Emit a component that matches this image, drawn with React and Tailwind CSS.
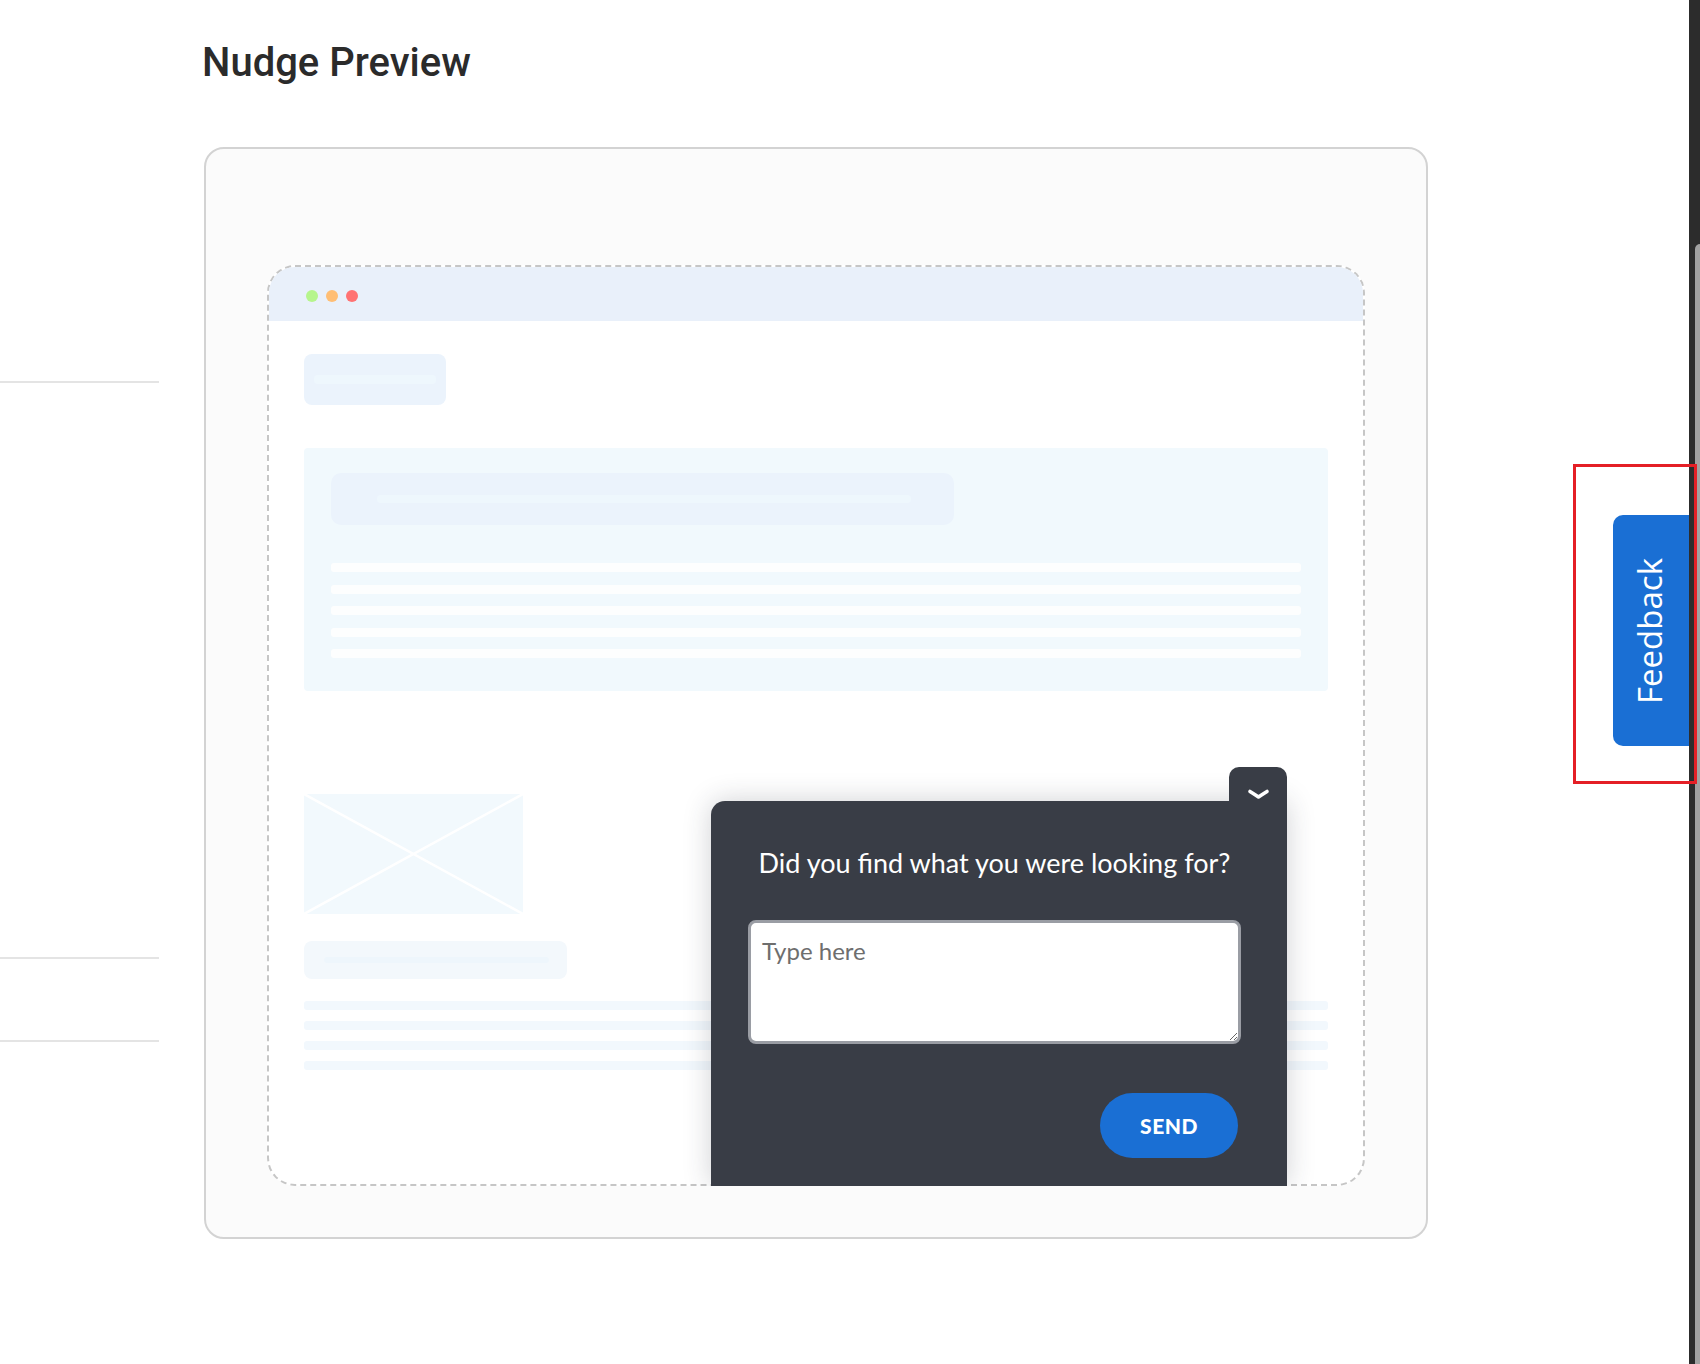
import { useState } from 'react';

function Dots() {
  return (
    <div className="flex h-[54px] items-center gap-[8px] bg-[#e9f0fa] pl-[37px] pt-[4px]">
      <span className="h-3 w-3 rounded-full bg-[#b6f58c]" />
      <span className="h-3 w-3 rounded-full bg-[#ffbe74]" />
      <span className="h-3 w-3 rounded-full bg-[#ff7272]" />
    </div>
  );
}

function FeedbackPopup() {
  const [text, setText] = useState('');
  return (
    <div className="absolute -bottom-[2px] left-[442px] h-[385px] w-[576px] rounded-tl-[14px] bg-[#393d46] pl-[37px] pr-[46px] pt-[46px] font-['Lato',sans-serif] shadow-[0_0_28px_rgba(40,44,60,0.22)] [clip-path:inset(-80px_-60px_0_-60px)]">
      {/* collapse tab */}
      <div className="absolute -top-[34px] right-0 flex h-[35px] w-[58px] justify-center rounded-t-[10px] bg-[#393d46] pt-[22px]">
        <svg width="23" height="11" viewBox="0 0 23 11" fill="none">
          <path
            d="M3 2.5 Q7 5 11.5 8 Q16 5 20 2.5"
            stroke="#fff"
            strokeWidth="3.6"
            strokeLinecap="round"
            strokeLinejoin="round"
          />
        </svg>
      </div>

      <p className="text-center text-[27px] leading-[1.2] text-white">
        Did you find what you were looking for?
      </p>

      <textarea
        value={text}
        onChange={(e) => setText(e.target.value)}
        placeholder="Type here"
        className="mt-[41px] block h-[124px] w-full rounded-[8px] border-[3px] border-[#9a9da4] bg-white pl-[11px] pt-[14px] font-['Lato',sans-serif] text-[24px] leading-[1.2] text-[#333] outline-none placeholder:text-[#6e6e6e]"
      />

      <div className="mt-[49px] flex justify-end pr-[3px]">
        <button className="h-[65px] w-[138px] rounded-full bg-[#1a6fd4] text-[21px] font-black tracking-[0.5px] text-white">
          SEND
        </button>
      </div>
    </div>
  );
}

function BrowserMock() {
  return (
    <div className="relative h-[921px] rounded-[28px] border-2 border-dashed border-[#c6c6c6] bg-white">
      <div className="h-full overflow-hidden rounded-[26px]">
        <Dots />

        <div className="px-[35px] pt-[33px]">
          {/* logo block */}
          <div className="flex h-[51px] w-[142px] items-center rounded-[8px] bg-[#ebf3fc] px-[10px]">
            <div className="h-[9px] w-full rounded-[4px] bg-[#eef7fd]" />
          </div>

          {/* hero */}
          <div className="mt-[43px] h-[243px] rounded-[4px] bg-[#f1f9fd] px-[27px] pt-[25px]">
            <div className="flex h-[52px] w-[623px] items-center rounded-[10px] bg-[#ebf3fc] pl-[46px] pr-[43px]">
              <div className="h-[8px] w-full rounded-[4px] bg-[#eef7fd]" />
            </div>
            <div className="mt-[38px] flex flex-col gap-[12.5px]">
              {[0, 1, 2, 3, 4].map((i) => (
                <div key={i} className="h-[9px] rounded-[3px] bg-[#fdfefe]" />
              ))}
            </div>
          </div>

          {/* image placeholder */}
          <div className="mt-[103px] h-[120px] w-[219px] bg-[#f2f9fd]">
            <svg className="h-full w-full" viewBox="0 0 219 120" preserveAspectRatio="none">
              <line x1="0" y1="0" x2="219" y2="120" stroke="#fff" strokeWidth="2.5" />
              <line x1="219" y1="0" x2="0" y2="120" stroke="#fff" strokeWidth="2.5" />
            </svg>
          </div>

          <div className="mt-[27px] flex h-[38px] w-[263px] items-center rounded-[8px] bg-[#f3f8fc] pl-[20px] pr-[18px]">
            <div className="h-[6px] w-full rounded-[3px] bg-[#eef6fc]" />
          </div>

          <div className="mt-[22px] flex flex-col gap-[11px]">
            {[0, 1, 2, 3].map((i) => (
              <div key={i} className="h-[9px] rounded-[3px] bg-[#f2f8fd]" />
            ))}
          </div>
        </div>
      </div>

      <FeedbackPopup />
    </div>
  );
}

export default function App() {
  return (
    <div className="relative flex min-h-[1364px] w-full bg-white">
      {/* left column rules */}
      <div className="w-[159px] shrink-0 pt-[381px]">
        <div className="h-[2px] bg-[#e4e4e4]" />
        <div className="mt-[574px] h-[2px] bg-[#e4e4e4]" />
        <div className="mt-[81px] h-[2px] bg-[#e4e4e4]" />
      </div>

      <main className="ml-[45px] w-[1224px] shrink-0">
        <h1 className="-ml-[2px] mt-[43px] font-['Roboto',sans-serif] text-[40px] font-medium leading-none text-[#2b2b2b]">
          Nudge Preview
        </h1>

        <div className="mt-[64px] rounded-[20px] border-2 border-[#d3d3d3] bg-[#fbfbfb] px-[61px] pb-[51px] pt-[116px]">
          <BrowserMock />
        </div>
      </main>

      {/* feedback tab */}
      <div className="flex flex-1 items-start justify-end pt-[515px]">
        <button className="flex h-[231px] w-[76px] items-center justify-center rounded-l-[10px] bg-[#1a6fd4] pr-[3px]">
          <span className="rotate-180 font-['Open_Sans',sans-serif] text-[33px] leading-none text-white [writing-mode:vertical-rl]">
            Feedback
          </span>
        </button>
      </div>

      {/* scrollbar */}
      <div className="w-[11px] shrink-0 bg-[#2c2c2c] pl-[6px] pt-[244px]">
        <div className="h-full rounded-tl-[5px] bg-[#a1a1a1]" />
      </div>

      {/* annotation box */}
      <div className="pointer-events-none absolute left-[1573px] top-[464px] h-[320px] w-[124px] border-[3px] border-[#e41f26]" />
    </div>
  );
}
